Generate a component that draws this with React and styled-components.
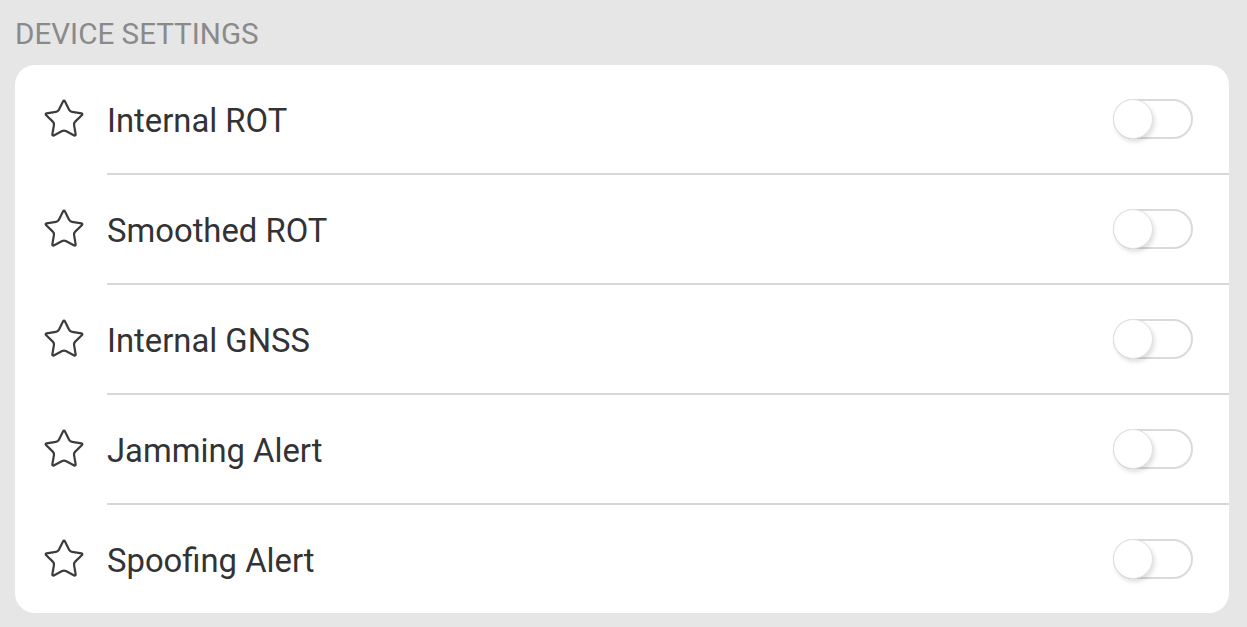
import React, { useState } from "react";
import styled, { createGlobalStyle } from "styled-components";
import { Star } from "lucide-react";

const GlobalStyle = createGlobalStyle`
  html, body {
    margin: 0;
    padding: 0;
    background: #e6e6e6;
    font-family: Roboto, "Liberation Sans", sans-serif;
  }
`;

const Page = styled.div`
  padding: 0 18px 0 15px;
  height: 627px;
  box-sizing: border-box;
`;

const Heading = styled.h3`
  margin: 0;
  padding-top: 19px;
  height: 65px;
  box-sizing: border-box;
  font-size: 29.6px;
  font-weight: 400;
  line-height: 30px;
  color: #8a8a8a;
`;

const Card = styled.div`
  background: #fff;
  border-radius: 20px;
  overflow: hidden;
`;

const Row = styled.div`
  display: flex;
  align-items: center;
  height: 108px;
  padding: 0 36px 0 26px;
  position: relative;
  border-bottom: ${(p) => (p.last ? "none" : "2px solid transparent")};
  &::after {
    content: "";
    display: ${(p) => (p.last ? "none" : "block")};
    position: absolute;
    left: 92px;
    right: 0;
    bottom: -2px;
    height: 2px;
    background: #d8d8d8;
  }
`;

const Icon = styled.div`
  width: 46px;
  height: 46px;
  margin-right: 20px;
  display: flex;
  align-items: center;
  justify-content: center;
  color: #3c3c3c;
  padding-bottom: 1px;
  box-sizing: border-box;
`;

const Label = styled.span`
  flex: 1;
  font-size: 32.8px;
  line-height: 40px;
  padding-top: 4px;
  color: #333;
`;

const Toggle = styled.button`
  width: 80px;
  height: 40px;
  border-radius: 20px;
  border: 2px solid #dadada;
  background: ${(p) => (p.on ? "#4cd964" : "#fff")};
  padding: 0;
  position: relative;
  cursor: pointer;
  box-sizing: border-box;
`;

const Knob = styled.span`
  position: absolute;
  top: -2px;
  left: ${(p) => (p.on ? "38px" : "-2px")};
  width: 40px;
  height: 40px;
  border-radius: 50%;
  background: #fff;
  border: 1.5px solid #e0e0e0;
  box-sizing: border-box;
  box-shadow: 2px 3px 4px rgba(0, 0, 0, 0.12);
`;

const items = [
  "Internal ROT",
  "Smoothed ROT",
  "Internal GNSS",
  "Jamming Alert",
  "Spoofing Alert",
];

export default function App() {
  const [state, setState] = useState({});
  return (
    <Page>
      <GlobalStyle />
      <Heading>DEVICE SETTINGS</Heading>
      <Card>
        {items.map((name, i) => (
          <Row key={name} last={i === items.length - 1}>
            <Icon>
              <Star size={44} strokeWidth={1.2} />
            </Icon>
            <Label>{name}</Label>
            <Toggle
              on={state[name]}
              onClick={() => setState({ ...state, [name]: !state[name] })}
            >
              <Knob on={state[name]} />
            </Toggle>
          </Row>
        ))}
      </Card>
    </Page>
  );
}
